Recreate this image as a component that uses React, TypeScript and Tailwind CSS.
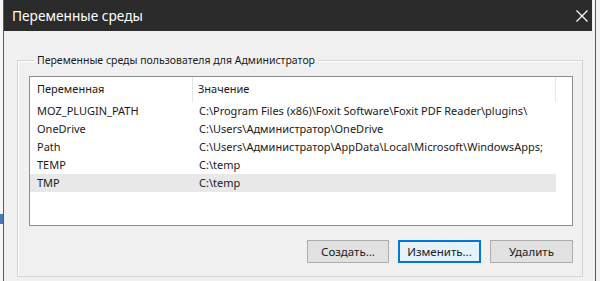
const rows = [
  { name: 'MOZ_PLUGIN_PATH', value: 'C:\\Program Files (x86)\\Foxit Software\\Foxit PDF Reader\\plugins\\' },
  { name: 'OneDrive', value: 'C:\\Users\\Администратор\\OneDrive' },
  { name: 'Path', value: 'C:\\Users\\Администратор\\AppData\\Local\\Microsoft\\WindowsApps;' },
  { name: 'TEMP', value: 'C:\\temp' },
  { name: 'TMP', value: 'C:\\temp', selected: true },
];

const font = { fontFamily: '"Noto Sans", "Segoe UI", sans-serif' };

const App = () => (
  <div className="w-[600px] h-[281px] flex bg-[#f7f7f7] overflow-hidden" style={font}>
    {/* background window edge */}
    <div className="w-[3px] flex flex-col">
      <div className="h-[214px]" />
      <div className="h-[10px] bg-[#4a78b5]" />
    </div>

    {/* dialog */}
    <div className="w-[593px] flex flex-col border-x border-[#5a5a5a] bg-[#f0f0f0]">
      <div className="h-[31px] shrink-0 bg-[#2b2b2b] flex items-center justify-between pl-[8px] pr-[4px] mr-[3px]">
        <span className="text-white text-[13.7px] leading-none">Переменные среды</span>
        <svg width="12" height="12" viewBox="0 0 12 12" className="mt-[1px]">
          <path d="M0.5 0.5 L11.5 11.5 M11.5 0.5 L0.5 11.5" stroke="#ffffff" strokeWidth="1.2" />
        </svg>
      </div>

      <div className="flex-1 pl-[13px] pr-[12px] pt-[21px]">
        <fieldset className="border border-[#d5d5d5] pl-[11px] pr-[9px] pb-[13px] shadow-[inset_1px_1px_0_#ffffff]">
          <legend className="ml-[5px] px-[3px] text-[10.5px] leading-[16px] text-[#1a1a1a]">
            Переменные среды пользователя для Администратор
          </legend>

          <div className="mt-[8px] h-[150px] border border-[#8d8d8d] bg-white text-[11px] text-[#1a1a1a]">
            <div className="flex h-[25px] items-center">
              <div className="w-[163px] h-full pl-[7px] flex items-center border-r border-[#e6e6e6]">Переменная</div>
              <div className="w-[363px] h-full pl-[5px] flex items-center border-r border-[#e6e6e6]">Значение</div>
            </div>
            {rows.map((r) => (
              <div key={r.name} className={`flex w-[526px] h-[18px] items-center ${r.selected ? 'bg-[#e8e8e8]' : ''}`}>
                <div className="w-[163px] pl-[7px] whitespace-nowrap">{r.name}</div>
                <div className="w-[363px] pl-[6px] whitespace-nowrap">{r.value}</div>
              </div>
            ))}
          </div>

          <div className="mt-[14px] flex justify-end gap-[9px] text-[11.5px] text-[#1a1a1a]">
            <button className="w-[82px] h-[23px] bg-[#e1e1e1] border border-[#adadad]">Создать...</button>
            <button className="w-[83px] h-[23px] bg-[#e5f1fb] border-2 border-[#0078d7]">Изменить...</button>
            <button className="w-[83px] h-[23px] bg-[#e1e1e1] border border-[#adadad]">Удалить</button>
          </div>
        </fieldset>
      </div>
    </div>

    <div className="flex-1 bg-[#f0f0f0]" />
  </div>
);

export default App;
